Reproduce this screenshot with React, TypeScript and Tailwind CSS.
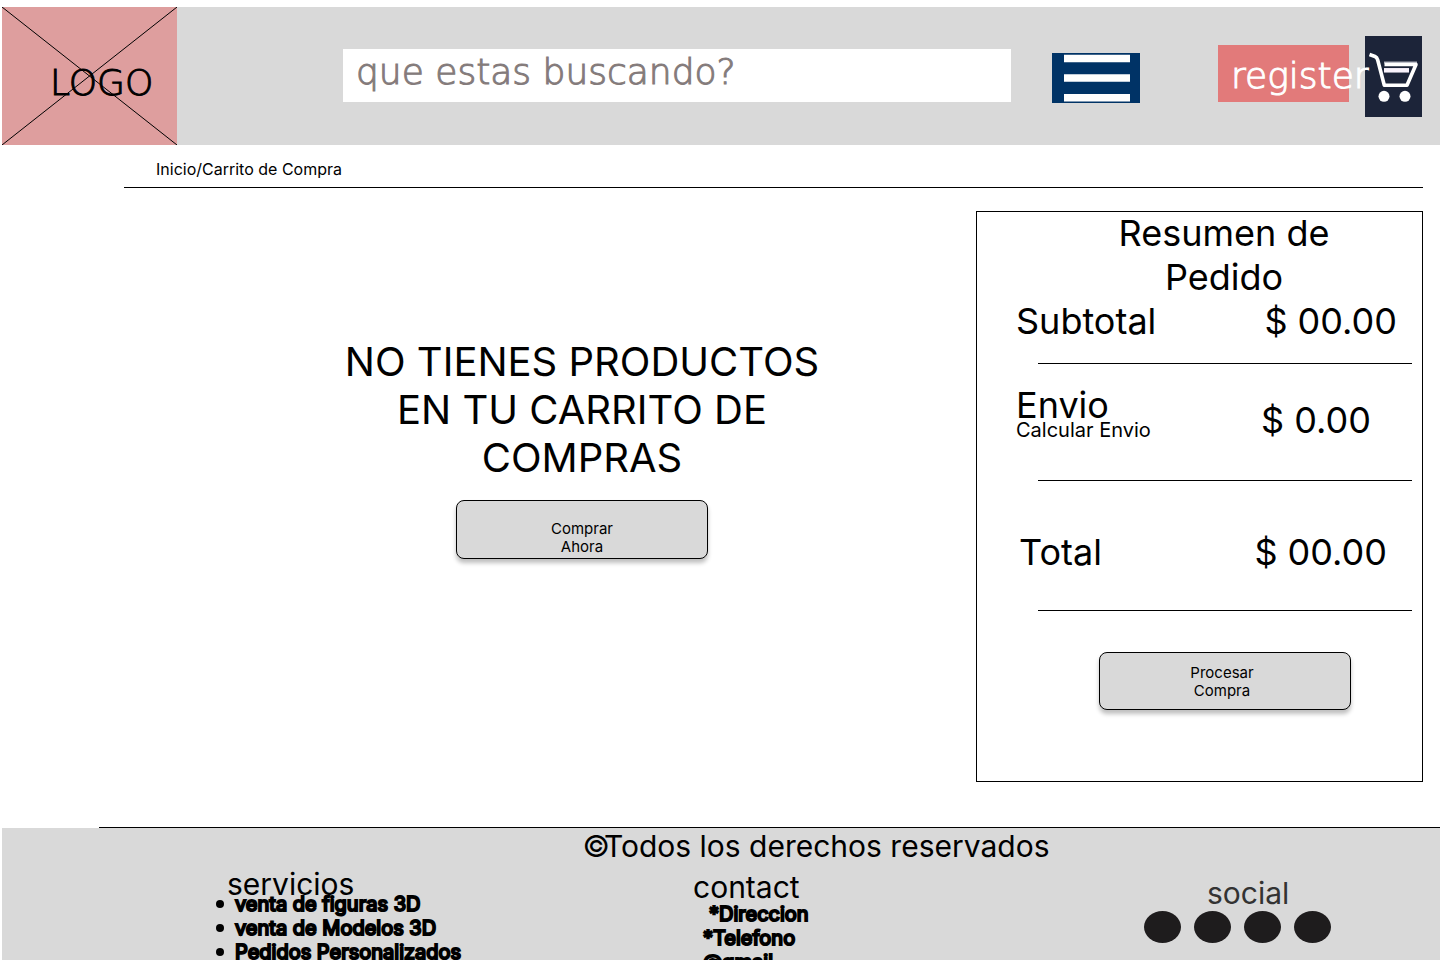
import type { ReactNode } from "react";

const display = "font-['DejaVu_Sans',sans-serif] font-extralight [-webkit-text-stroke:1px]";

function Logo() {
  return (
    <a href="#inicio" className="relative flex h-[138px] w-[175px] shrink-0 items-center bg-[#de9e9e] pt-[14px] pl-12">
      <svg className="absolute inset-0 h-full w-full" viewBox="0 0 175 138" preserveAspectRatio="none" aria-hidden="true">
        <path d="M0 0 L175 138 M175 0 L0 138" stroke="#000" strokeWidth="1" fill="none" />
      </svg>
      <span className={`relative text-[36px] leading-[44px] ${display}`}>LOGO</span>
    </a>
  );
}

function MenuIcon() {
  return (
    <svg className="h-[50px] w-[88px]" viewBox="0 0 88 50" aria-hidden="true">
      <path d="M12 1.800h66v7.400h-66z M12 21.300h66v7.500h-66z M12 41h66v7.500h-66z" fill="#fff" />
    </svg>
  );
}

function CartIcon() {
  return (
    <svg className="h-[81px] w-[57px]" viewBox="0 0 57 81" fill="none" aria-hidden="true">
      <path d="M19 26.500h33" stroke="#a9abb8" strokeWidth="2" />
      <path d="M4.500 18.500L10 20.500Q12 21.300 12.700 24L19.300 49.200H42L51 28.500H19.500" stroke="#fff" strokeWidth="3.600" strokeLinejoin="round" />
      <path d="M19 34.300h25" stroke="#f8f2fb" strokeWidth="4.500" />
      <circle cx="19" cy="60.300" r="5.500" fill="#fff" />
      <circle cx="40" cy="60.300" r="5.500" fill="#fff" />
    </svg>
  );
}

function Header() {
  return (
    <header className="flex items-start bg-[#d9d9d9] pr-[18px]">
      <Logo />
      <input
        type="search"
        aria-label="Buscar"
        placeholder="que estas buscando?"
        className={`mt-[42px] ml-[166px] h-[53px] min-w-0 flex-1 bg-white pb-2 pl-[13px] text-[36px] placeholder:text-[#847b7b] placeholder:opacity-100 ${display}`}
      />
      <button type="button" aria-label="Menú" className="mt-[46px] ml-[41px] shrink-0 bg-[#003366]">
        <MenuIcon />
      </button>
      <button
        type="button"
        className={`relative z-10 mt-[38px] ml-[78px] flex h-[57px] w-[131px] shrink-0 items-center bg-[#e27a7a] pt-1 pl-[13px] text-[36px] leading-[44px] whitespace-nowrap text-white ${display}`}
      >
        register
      </button>
      <button type="button" aria-label="Carrito" className="mt-[29px] ml-4 shrink-0 bg-[#1c2439]">
        <CartIcon />
      </button>
    </header>
  );
}

function ActionButton({ className, children }: { className: string; children: ReactNode }) {
  return (
    <button
      type="button"
      className={`w-[252px] rounded-lg border border-black bg-[#d9d9d9] text-[15px] leading-[18px] shadow-[0_4px_4px_rgba(0,0,0,0.25)] ${className}`}
    >
      {children}
    </button>
  );
}

function Divider({ className }: { className: string }) {
  return <hr className={`mr-[10px] ml-[61px] border-t border-black ${className}`} />;
}

function OrderSummary() {
  return (
    <aside className="w-[447px] shrink-0 border border-black pb-[71px] text-[36px] leading-[44px]">
      <h2 className="-mt-px pl-[49px] text-center">
        Resumen de
        <br />
        Pedido
      </h2>
      <div className="flex justify-between pr-[25px] pl-[39px]">
        <span>Subtotal</span>
        <span>$ 00.00</span>
      </div>
      <Divider className="mt-5" />
      <div className="mt-[19px] flex items-end justify-between pr-[51px] pl-[39px]">
        <div>
          <div>Envio</div>
          <a href="#envio" className="-mt-[9px] block text-[20px] leading-6">
            Calcular Envio
          </a>
        </div>
        <span>$ 0.00</span>
      </div>
      <Divider className="mt-[38px]" />
      <div className="mt-[49px] flex justify-between pr-[35px] pl-[42px]">
        <span>Total</span>
        <span>$ 00.00</span>
      </div>
      <Divider className="mt-[36px]" />
      <div className="mt-[41px] flex justify-center pl-[51px]">
        <ActionButton className="pt-[11px] pr-[6px] pb-[9px]">
          Procesar
          <br />
          Compra
        </ActionButton>
      </div>
    </aside>
  );
}

const services = ["venta de figuras 3D", "venta de Modelos 3D", "Pedidos Personalizados"];
const socials = ["Facebook", "Instagram", "Twitter", "YouTube"];

function Footer() {
  return (
    <>
      <hr className="ml-[97px] border-t border-black" />
      <footer className="bg-[#d9d9d9]">
        <p className="pl-[190px] text-center text-[30px] leading-9">
          <span>©</span>
          <span className="-ml-[6px]">Todos los derechos reservados</span>
        </p>
        <div className="grid grid-cols-[479fr_451fr_296fr] pl-[212px]">
          <section className="pt-[2px]">
            <h3 className="pl-[13px] text-[30px] leading-9">servicios</h3>
            <ul className="-mt-[10px] pl-[2px] text-[20px] leading-6 [-webkit-text-stroke:2px_black]">
              {services.map((s) => (
                <li key={s} className="flex items-center gap-[11px] before:size-2 before:rounded-full before:bg-black">
                  {s}
                </li>
              ))}
            </ul>
          </section>
          <section className="pt-[5px]">
            <h3 className="text-[30px] leading-9">contact</h3>
            <address className="-mt-[3px] pl-[10px] text-[20px] leading-6 not-italic [-webkit-text-stroke:2px_black]">
              <div className="pl-[6px]">*Direccion</div>
              <div>*Telefono</div>
              <div>@gmail</div>
            </address>
          </section>
          <section className="pt-[11px]">
            <h3 className="pl-[63px] text-[30px] leading-9 text-[#333]">social</h3>
            <div className="flex gap-[13px]">
              {socials.map((s) => (
                <a key={s} href="#social" aria-label={s} className="h-8 w-[37px] rounded-[50%] bg-[#1e1c1d]" />
              ))}
            </div>
          </section>
        </div>
      </footer>
    </>
  );
}

export default function App() {
  return (
    <div className="bg-white pt-[7px] pl-[2px] font-['Inter',sans-serif] text-black">
      <Header />
      <nav className="mr-[17px] ml-[122px] border-b border-black pt-[14px] pb-2 pl-8 text-[16px] leading-5">
        <a href="#inicio">Inicio</a>/<a href="#carrito">Carrito de Compra</a>
      </nav>
      <main className="flex pt-[23px] pr-[17px] pb-[45px]">
        <section className="flex flex-1 flex-col items-center pt-[127px] pl-[186px]">
          <h1 className="max-w-[500px] text-center text-[40px] leading-[48px]">NO TIENES PRODUCTOS EN TU CARRITO DE COMPRAS</h1>
          <ActionButton className="mt-[18px] pt-[19px] pb-[2px]">
            Comprar
            <br />
            Ahora
          </ActionButton>
        </section>
        <OrderSummary />
      </main>
      <Footer />
    </div>
  );
}
